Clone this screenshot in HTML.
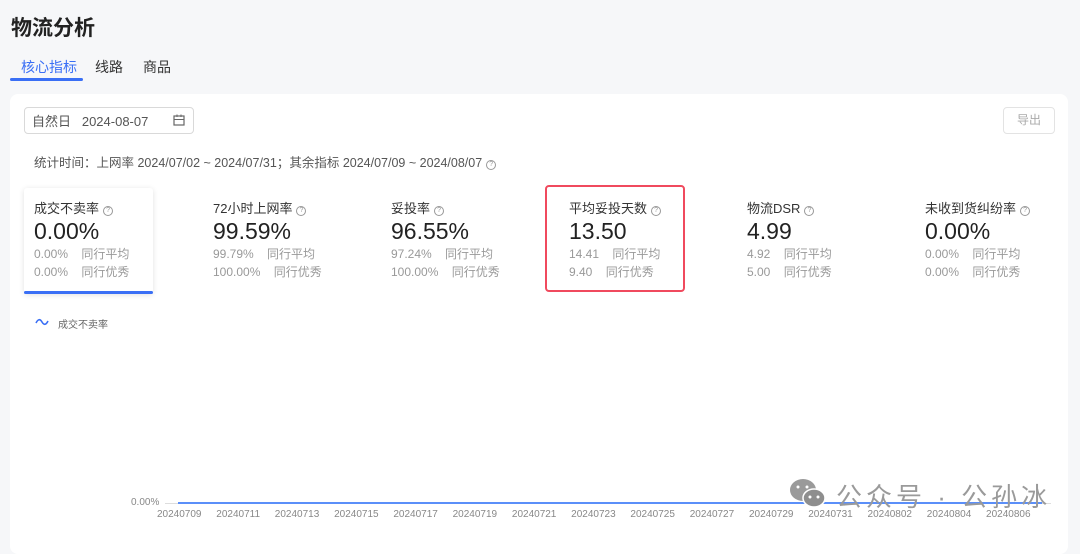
<!DOCTYPE html>
<html><head><meta charset="utf-8"><style>
*{margin:0;padding:0;box-sizing:border-box}
body{width:1080px;height:538px;overflow:hidden;background:#f6f7f9;font-family:"Liberation Sans","Noto Sans CJK SC",sans-serif;color:#222;position:relative}
.a{position:absolute;white-space:nowrap}
.q{display:inline-block;width:10px;height:10px;border:1px solid #999;border-radius:50%;font-size:7px;line-height:8px;text-align:center;color:#999;vertical-align:1px;margin-left:4px}
.lab{font-size:13px;color:#333}
.val{font-size:23px;color:#222;line-height:28px}
.sub{font-size:12px;color:#999}
.xl{font-size:10px;color:#888}
</style></head><body>
<div class="a" style="left:11px;top:12px;font-size:21px;font-weight:bold;color:#222">物流分析</div>
<div class="a" style="left:21px;top:57px;font-size:14px;color:#3a6ff5">核心指标</div>
<div class="a" style="left:10px;top:78px;width:73px;height:3px;background:#3a6ff5;border-radius:2px"></div>
<div class="a" style="left:95px;top:57px;font-size:14px;color:#333">线路</div>
<div class="a" style="left:143px;top:57px;font-size:14px;color:#333">商品</div>
<div class="a" style="left:10px;top:94px;width:1058px;height:460px;background:#fff;border-radius:8px"></div>
<div class="a" style="left:24px;top:107px;width:170px;height:27px;border:1px solid #d9d9d9;border-radius:4px"></div>
<div class="a" style="left:32px;top:111px;font-size:13px;color:#555">自然日&nbsp;&nbsp;&nbsp;2024-08-07</div>
<svg class="a" style="left:172px;top:113px" width="14" height="14" viewBox="0 0 14 14"><rect x="2" y="3" width="10" height="9" fill="none" stroke="#666" stroke-width="1.2"/><line x1="2" y1="6.5" x2="12" y2="6.5" stroke="#666"/><line x1="5" y1="1.5" x2="5" y2="4" stroke="#666"/><line x1="9" y1="1.5" x2="9" y2="4" stroke="#666"/></svg>
<div class="a" style="left:1003px;top:107px;width:52px;height:27px;border:1px solid #e3e3e3;border-radius:4px;font-size:12px;color:#aaa;text-align:center;line-height:25px">导出</div>
<div class="a" style="left:34px;top:152px;font-size:12.5px;color:#555">统计时间：上网率 2024/07/02 ~ 2024/07/31；其余指标 2024/07/09 ~ 2024/08/07<span class="q">?</span></div>
<div class="a" style="left:24px;top:188px;width:129px;height:106px;background:#fff;box-shadow:0 1px 6px rgba(0,0,0,.12);border-radius:3px"></div>
<div class="a" style="left:24px;top:291px;width:129px;height:3px;background:#3a6ff5;border-radius:2px"></div>
<div class="a" style="left:545px;top:185px;width:140px;height:107px;border:2.5px solid #f04a5e;border-radius:4px"></div>

<div class="a" style="left:34px;top:198px"><div class="lab">成交不卖率<span class="q">?</span></div><div class="val">0.00%</div><div class="sub">0.00%&nbsp;&nbsp;&nbsp;&nbsp;同行平均</div><div class="sub" style="margin-top:1px">0.00%&nbsp;&nbsp;&nbsp;&nbsp;同行优秀</div></div>
<div class="a" style="left:213px;top:198px"><div class="lab">72小时上网率<span class="q">?</span></div><div class="val">99.59%</div><div class="sub">99.79%&nbsp;&nbsp;&nbsp;&nbsp;同行平均</div><div class="sub" style="margin-top:1px">100.00%&nbsp;&nbsp;&nbsp;&nbsp;同行优秀</div></div>
<div class="a" style="left:391px;top:198px"><div class="lab">妥投率<span class="q">?</span></div><div class="val">96.55%</div><div class="sub">97.24%&nbsp;&nbsp;&nbsp;&nbsp;同行平均</div><div class="sub" style="margin-top:1px">100.00%&nbsp;&nbsp;&nbsp;&nbsp;同行优秀</div></div>
<div class="a" style="left:569px;top:198px"><div class="lab">平均妥投天数<span class="q">?</span></div><div class="val">13.50</div><div class="sub">14.41&nbsp;&nbsp;&nbsp;&nbsp;同行平均</div><div class="sub" style="margin-top:1px">9.40&nbsp;&nbsp;&nbsp;&nbsp;同行优秀</div></div>
<div class="a" style="left:747px;top:198px"><div class="lab">物流DSR<span class="q">?</span></div><div class="val">4.99</div><div class="sub">4.92&nbsp;&nbsp;&nbsp;&nbsp;同行平均</div><div class="sub" style="margin-top:1px">5.00&nbsp;&nbsp;&nbsp;&nbsp;同行优秀</div></div>
<div class="a" style="left:925px;top:198px"><div class="lab">未收到货纠纷率<span class="q">?</span></div><div class="val">0.00%</div><div class="sub">0.00%&nbsp;&nbsp;&nbsp;&nbsp;同行平均</div><div class="sub" style="margin-top:1px">0.00%&nbsp;&nbsp;&nbsp;&nbsp;同行优秀</div></div>

<svg class="a" style="left:35px;top:317px" width="14" height="10" viewBox="0 0 14 10"><path d="M1 6 Q4 0 7 5 T13 4" fill="none" stroke="#3a6ff5" stroke-width="1.6"/></svg>
<div class="a" style="left:58px;top:316px;font-size:10px;color:#666">成交不卖率</div>

<div class="a xl" style="left:131px;top:497px">0.00%</div>
<div class="a" style="left:165px;top:503px;width:886px;height:1px;background:#ddd"></div>
<div class="a" style="left:178px;top:502px;width:864px;height:2px;background:#5b8ff9"></div>
<div class="a xl" style="left:157px;top:509px;word-spacing:12px">20240709 20240711 20240713 20240715 20240717 20240719 20240721 20240723 20240725 20240727 20240729 20240731 20240802 20240804 20240806</div>

<svg class="a" style="left:787px;top:476px" width="44" height="36" viewBox="0 0 44 36"><ellipse cx="16" cy="14" rx="13" ry="11" fill="#9a9a9a"/><ellipse cx="27" cy="22" rx="11" ry="9" fill="#8e8e8e" stroke="#fff" stroke-width="1.5"/><circle cx="23" cy="21" r="1.5" fill="#fff"/><circle cx="31" cy="21" r="1.5" fill="#fff"/><circle cx="11" cy="11" r="1.5" fill="#fff"/><circle cx="20" cy="11" r="1.5" fill="#fff"/></svg>
<div class="a" style="left:836px;top:477px;font-size:26px;color:#9a9a9a;letter-spacing:4px">公众号 · 公孙冰</div>
</body></html>
